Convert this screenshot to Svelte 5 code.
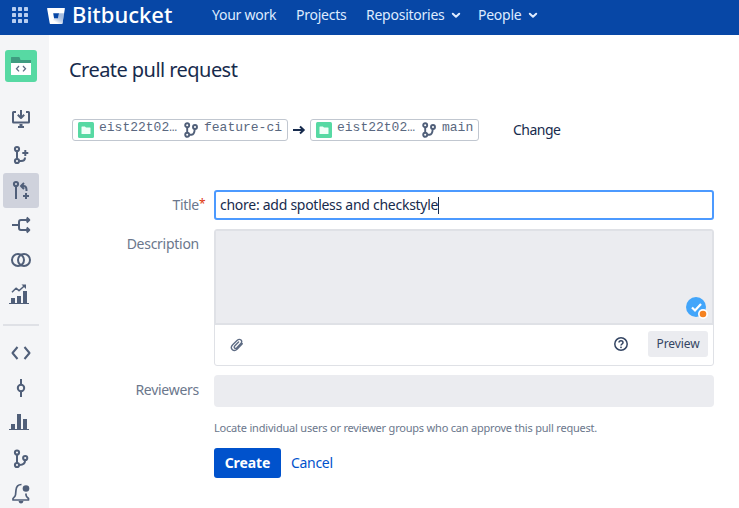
<script>
  let title = $state('chore: add spotless and checkstyle');
  const groups = [
    ['clone', 'branch-add', 'pull-request', 'fork', 'compare', 'reports'],
    ['source', 'commits', 'graphs', 'branches', 'notifications'],
  ];
</script>

{#snippet chevron()}
  <svg width="10" height="8" viewBox="0 0 10 8"><path d="M1.8 2.700 5 5.700l3.200-3" fill="none" stroke="#deebff" stroke-width="2" stroke-linecap="round" stroke-linejoin="round" /></svg>
{/snippet}

{#snippet branch()}
  <svg class="branch" width="14" height="16" viewBox="0 0 14 16">
    <g fill="none" stroke="#505f79" stroke-width="1.9">
      <circle cx="3.2" cy="3.2" r="2" /><circle cx="3.2" cy="12.8" r="2" /><circle cx="11" cy="5" r="2" />
      <path d="M3.2 5.2v5.6M5.2 12.8H7.5Q10.5 12.5 10.7 7" />
    </g>
  </svg>
{/snippet}

{#snippet ref(name, wide)}
  <span class="ref" class:wide>
    <svg class="repo" width="16" height="16" viewBox="0 0 16 16">
      <rect width="16" height="16" rx="1.5" fill="#57d9a3" />
      <path d="M3.500 4.900q0-.5.500-.5h2.900l1.100 1.200h4q.5 0 .5.500v5.500q0 .5-.5.5H4q-.5 0-.5-.5z" fill="#f0fff8" />
    </svg>
    <span class="mono project">eist22t02…</span>
    {@render branch()}
    <span class="mono">{name}</span>
  </span>
{/snippet}

{#snippet sideIcon(name)}
  <svg width="36" height="35" viewBox="0 0 36 35" fill="none" stroke="#505f79" stroke-width="2" stroke-linejoin="round">
    {#if name === 'clone'}
      <path d="M13 9h-2.500q-.5 0-.5.5v9.500q0 .5.5.5h15q.5 0 .5-.5V9.500q0-.5-.5-.5H23M18 7v7.500M14.800 11.800 18 15l3.200-3.200" />
      <path d="M16.500 21h3v2h1.500v2h-6v-2h1.500z" fill="#505f79" stroke="none" />
    {:else if name === 'branch-add'}
      <circle cx="14" cy="11" r="2.100" /><circle cx="14" cy="23" r="2.100" />
      <path d="M14 13v8M16.500 23h1.500q4 0 4-3.500M22.300 12v6M19.300 15h6" />
    {:else if name === 'pull-request'}
      <circle cx="13" cy="11" r="2.100" />
      <path d="M13 13.500V26M21 10 18 13l3 3M18 13h2.500q3 0 3 4v1M23 20v6M20 23h6" />
    {:else if name === 'fork'}
      <path d="M9 17h7M16 17v-3q0-2 2-2h7M16 17v3q0 2 2 2h7M23.700 9.500 26.300 12l-2.600 2.500M23.700 19.500l2.600 2.500-2.600 2.500" />
    {:else if name === 'compare'}
      <circle cx="15" cy="17" r="6" /><circle cx="21" cy="17" r="6" />
    {:else if name === 'reports'}
      <path d="M6 25h20v1H6zM8 20h4v5H8zM14 18h4v7h-4zM20 13h4v12h-4z" fill="#505f79" stroke="none" />
      <path d="m9 14.200 4-4 3 2.500 5.500-5" stroke-width="1.500" /><path d="M18.500 6.500h4.500V11z" fill="#505f79" stroke="none" />
    {:else if name === 'source'}
      <path d="m14.500 12-5 6 5 6M21.500 12l5 6-5 6" />
    {:else if name === 'commits'}
      <circle cx="18" cy="18" r="3.200" /><path d="M18 9v6M18 21v6" />
    {:else if name === 'graphs'}
      <path d="M6 24h20v1H6zM8 19h4v5H8zM14 9h4v15h-4zM20 14h4v10h-4z" fill="#505f79" stroke="none" />
    {:else if name === 'branches'}
      <circle cx="14" cy="12.500" r="2.100" /><circle cx="14" cy="25" r="2.100" /><circle cx="22.200" cy="18" r="2.100" />
      <path d="M14 14.500V23M16.500 25q5.500 0 5.700-5" />
    {:else}
      <path d="M18.500 9.500q-5 0-5.500 5.500l-.5 5q0 1-2.500 3.500v1.500h15.500v-1.500q-2.500-2-2.500-3.500v-1.500" stroke-width="1.700" />
      <circle cx="23" cy="13.500" r="3.300" fill="#505f79" stroke="none" /><path d="M15.500 26h5q-.5 2.500-2.500 2.500T15.500 26z" fill="#505f79" stroke="none" />
    {/if}
  </svg>
{/snippet}

<div class="app">
  <header>
    <svg class="grid" width="16" height="16" viewBox="0 0 16 16" fill="#b8cef0">
      {#each [0, 6, 12] as y}{#each [0, 6, 12] as x}<rect {x} {y} width="4" height="4" rx=".4" />{/each}{/each}
    </svg>
    <svg class="mark" width="18" height="16" viewBox="0 0 18 16">
      <defs><linearGradient id="fold" x1="1" y1="0" x2=".2" y2="1"><stop offset="0" stop-color="#0747a6" stop-opacity=".3" /><stop offset=".8" stop-color="#fff" /></linearGradient></defs>
      <path d="M.6 0h16.800q.6 0 .5.600l-2.400 14.600q-.1.800-.9.800H3.600q-.8 0-.9-.8L.1.600Q0 0 .6 0zM6.200 5.200l.9 5.200h4l.9-5.200z" fill="#fff" fill-rule="evenodd" />
      <path d="M17.100 5.200H12l-.9 5.200h-4L2.900 15.700l.7.300h11q.8 0 .9-.8z" fill="url(#fold)" />
    </svg>
    <span class="brand">Bitbucket</span>
    <nav>
      <a class="work" href="#work">Your work</a>
      <a class="projects" href="#projects">Projects</a>
      <a class="repositories" href="#repositories">Repositories</a>{@render chevron()}
      <a class="people" href="#people">People</a>{@render chevron()}
    </nav>
  </header>

  <div class="body">
    <aside>
      <svg class="avatar" width="32" height="32" viewBox="0 0 32 32">
        <rect width="32" height="32" rx="3" fill="#57d9a3" />
        <path d="M6 7.500q0-.5.500-.5H14q.5 0 .7.500L15.500 10H26v3H6z" fill="#3f9c80" />
        <path d="M6 13h20v11.500q0 .5-.5.500h-19q-.5 0-.5-.5z" fill="#fff" />
        <path d="m14 16-2.500 2.700 2.500 2.700M18 16l2.500 2.700-2.500 2.700" fill="none" stroke="#5e6c84" stroke-width="1.300" />
      </svg>
      {#each groups as group, i}
        {#if i}<hr />{/if}
        {#each group as name}
          <div class="item" class:selected={name === 'pull-request'}>{@render sideIcon(name)}</div>
        {/each}
      {/each}
    </aside>

    <main>
      <h1>Create pull request</h1>
      <div class="refs">
        {@render ref('feature-ci', true)}
        <svg class="arrow" width="14" height="12" viewBox="0 0 14 12"><path d="M1 6h10M8 2.500 11.700 6 8 9.500" fill="none" stroke="#172b4d" stroke-width="2" /></svg>
        {@render ref('main', false)}
        <span class="change">Change</span>
      </div>

      <div class="row title-row">
        <label for="title"><span>Title</span><b>*</b></label>
        <div class="input" id="title"><span>{title}</span><i></i></div>
      </div>

      <div class="row description">
        <label for="description"><span>Description</span></label>
        <div class="editor" id="description">
          <div class="textarea">
            <svg width="22" height="22" viewBox="0 0 22 22">
              <circle cx="10" cy="10" r="10" fill="#42a5fa" />
              <path d="m6 10.500 3 3 6-6.500" fill="none" stroke="#fff" stroke-width="2.200" />
              <circle cx="17" cy="17" r="5" fill="#fff" /><circle cx="17" cy="17" r="3.300" fill="#f58220" />
            </svg>
          </div>
          <div class="toolbar">
            <svg class="clip" width="14" height="14" viewBox="0 0 14 14"><path d="M12.300 5.800 7.300 11Q4.600 13.700 2.400 11.700 0 9.500 2.700 6.700L7 2.500q2.300-2 4-.4 1.600 1.700-.4 3.700L6.800 9.700q-1.300 1.200-2.200.3-.9-1 .3-2.200l3.700-3.700" fill="none" stroke="#5e6c84" stroke-width="1.400" stroke-linecap="round" /></svg>
            <svg class="help" width="14" height="14" viewBox="0 0 14 14"><circle cx="7" cy="7" r="6.200" fill="none" stroke="#344563" stroke-width="1.500" /><path d="M5 5.600Q5 3.700 7 3.700t2 1.800Q9 6.500 7.900 7.100 7 7.600 7 8.600" fill="none" stroke="#344563" stroke-width="1.500" /><circle cx="7" cy="10.300" r=".9" fill="#344563" /></svg>
            <button class="preview"><span>Preview</span></button>
          </div>
        </div>
      </div>

      <div class="row reviewers">
        <label for="reviewers"><span>Reviewers</span></label>
        <div class="picker" id="reviewers"></div>
      </div>
      <p class="hint">Locate individual users or reviewer groups who can approve this pull request.</p>
      <div class="actions"><button class="create"><span>Create</span></button><a class="cancel" href="#cancel">Cancel</a></div>
    </main>
  </div>
</div>

<style>
  * { box-sizing: border-box; }
  .app { width: 739px; height: 508px; overflow: hidden; background: #fff; color: #172b4d; font: 14px/20px "Noto Sans", sans-serif; white-space: nowrap; }
  svg { display: block; flex: none; }
  a { text-decoration: none; }
  header { height: 35px; background: #0747a6; display: flex; align-items: flex-start; color: #deebff; }
  .grid { margin: 7px 0 0 12px; }
  .mark { margin: 8px 0 0 19px; }
  .brand { margin: 0 0 0 7px; width: 101px; font-size: 22px; line-height: 28px; font-weight: 500; color: #fff; letter-spacing: 0; }
  nav { display: flex; align-items: center; height: 30px; margin-left: 39px; }
  nav a { color: #deebff; letter-spacing: -.25px; }
  .work { width: 84px; }
  .projects { width: 70px; }
  .repositories { width: 85px; }
  .people { width: 50px; margin-left: 17px; }
  .body { display: flex; height: 473px; }
  aside { width: 49px; flex: none; background: #f4f5f7; padding: 15px 0 0 3px; overflow: hidden; }
  .avatar { margin: 0 0 21px 2px; }
  .item { width: 36px; height: 35px; border-radius: 3px; }
  .selected { background: #cfd2dc; }
  hr { width: 36px; height: 2px; border: 0; background: #dfe1e6; margin: 11px 0 9px; }
  main { flex: 1; padding: 21px 0 0 20px; }
  h1 { margin: 0; font-size: 20px; line-height: 28px; font-weight: 400; letter-spacing: -.55px; }
  .refs { display: flex; align-items: center; height: 22px; margin: 35px 0 0 3px; }
  .ref { display: flex; width: 169px; height: 22px; padding-left: 5px; border: 1px solid #c1c7d0; border-radius: 3px; }
  .wide { width: 216px; }
  .repo { margin-top: 2px; }
  .mono { font: 13px/16px "Liberation Mono", monospace; color: #5a6880; }
  .project { width: 79px; margin-left: 5px; }
  .branch { margin: 2px 6px 0 6px; }
  .arrow { margin: 0 4px; }
  .change { margin-left: 34px; letter-spacing: -.5px; }
  .row { display: flex; }
  label { width: 145px; display: flex; justify-content: flex-end; padding-right: 15px; color: #6b778c; letter-spacing: -.27px; }
  .title-row { margin-top: 49px; }
  .title-row label { padding: 5px 9px 0 0; }
  b { width: 6px; color: #de350b; font-size: 12px; font-weight: 400; line-height: 18px; }
  .input { display: flex; align-items: center; width: 500px; height: 30px; border: 2px solid #4c9aff; border-radius: 3px; padding-left: 4px; }
  .input span { letter-spacing: -.27px; }
  .input i { width: 1px; height: 17px; background: #172b4d; }
  .description { margin-top: 9px; }
  .description label { padding-top: 5px; }
  .editor { width: 500px; height: 137px; border: 1px solid #dfe1e6; border-radius: 3px; }
  .textarea { height: 95px; background: #ebecf0; border: 2px solid #dfe1e6; border-width: 1px 1px 2px; display: flex; justify-content: flex-end; align-items: flex-end; padding: 0 4px 4px; }
  .toolbar { display: flex; align-items: center; height: 38px; padding: 0 5px 0 15px; }
  .clip { margin-top: 2px; }
  .help { margin-left: auto; }
  .preview { width: 60px; height: 26px; margin-left: 20px; padding: 0; border: 0; border-radius: 3px; background: #ebecf0; color: #344563; font: 12px/20px "Noto Sans", sans-serif; letter-spacing: -.1px; }
  .reviewers { margin-top: 9px; }
  .reviewers label { padding-top: 5px; }
  .picker { width: 500px; height: 32px; border-radius: 4px; background: #ebecf0; }
  .hint { margin: 13px 0 0 145px; font-size: 11px; line-height: 16px; color: #6b778c; letter-spacing: -.205px; }
  .actions { display: flex; align-items: center; margin: 12px 0 0 145px; }
  .create { width: 67px; height: 30px; padding: 0; border: 0; border-radius: 3px; background: #0052cc; color: #fff; font: bold 14px/20px "Noto Sans", sans-serif; letter-spacing: -.1px; }
  .cancel { margin-left: 10px; color: #0052cc; letter-spacing: -.3px; }
</style>
